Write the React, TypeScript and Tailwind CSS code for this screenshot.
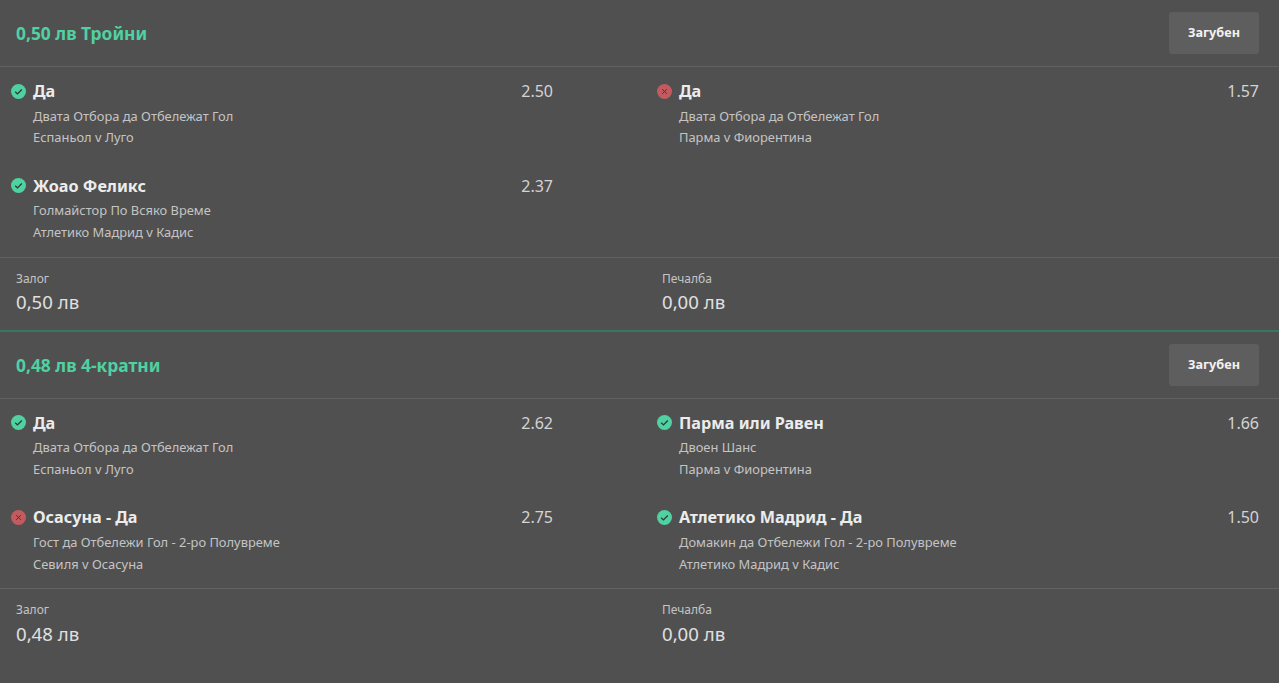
import React from 'react';

type Leg = { won: boolean; name: string; market: string; match: string; odds: string };
type Bet = { title: string; stake: string; returns: string; legs: (Leg | null)[] };

const bets: Bet[] = [
  {
    title: '0,50 лв Тройни',
    stake: '0,50 лв',
    returns: '0,00 лв',
    legs: [
      { won: true, name: 'Да', market: 'Двата Отбора да Отбележат Гол', match: 'Еспаньол v Луго', odds: '2.50' },
      { won: false, name: 'Да', market: 'Двата Отбора да Отбележат Гол', match: 'Парма v Фиорентина', odds: '1.57' },
      { won: true, name: 'Жоао Феликс', market: 'Голмайстор По Всяко Време', match: 'Атлетико Мадрид v Кадис', odds: '2.37' },
      null,
    ],
  },
  {
    title: '0,48 лв 4-кратни',
    stake: '0,48 лв',
    returns: '0,00 лв',
    legs: [
      { won: true, name: 'Да', market: 'Двата Отбора да Отбележат Гол', match: 'Еспаньол v Луго', odds: '2.62' },
      { won: true, name: 'Парма или Равен', market: 'Двоен Шанс', match: 'Парма v Фиорентина', odds: '1.66' },
      { won: false, name: 'Осасуна - Да', market: 'Гост да Отбележи Гол - 2-ро Полувреме', match: 'Севиля v Осасуна', odds: '2.75' },
      { won: true, name: 'Атлетико Мадрид - Да', market: 'Домакин да Отбележи Гол - 2-ро Полувреме', match: 'Атлетико Мадрид v Кадис', odds: '1.50' },
    ],
  },
];

const StatusIcon: React.FC<{ won: boolean }> = ({ won }) => (
  <svg width="15" height="15" viewBox="0 0 15 15" className="shrink-0">
    <circle cx="7.5" cy="7.5" r="7.5" fill={won ? '#4fd1a1' : '#c25b5f'} />
    {won ? (
      <path d="M4.2 7.7l2.3 2.2 4.3-4.4" fill="none" stroke="#2f3a36" strokeWidth="1.3" />
    ) : (
      <path d="M5.2 5.2l4.6 4.6M9.8 5.2l-4.6 4.6" fill="none" stroke="#4a3033" strokeWidth="1" />
    )}
  </svg>
);

const LegRow: React.FC<{ leg: Leg | null; left: boolean }> = ({ leg, left }) => {
  if (!leg) return <div />;
  return (
    <div className={`h-[94.8px] pl-[11px] pt-[13.2px] ${left ? 'pr-[93px]' : 'pr-5'}`}>
      <div className="flex items-center h-[22px]">
        <StatusIcon won={leg.won} />
        <span className="ml-[7px] text-[16.2px] font-bold text-[#ececec]">{leg.name}</span>
        <span className="ml-auto mb-[0.4px] text-[16px] text-[#d4d4d4]">{leg.odds}</span>
      </div>
      <div className="ml-[22px] mt-[3.4px] text-[12.9px] leading-[21.6px] text-[#c4c4c4]">
        <div>{leg.market}</div>
        <div>{leg.match}</div>
      </div>
    </div>
  );
};

const BetCard: React.FC<{ bet: Bet; last: boolean }> = ({ bet, last }) => (
  <section className={last ? '' : 'border-b-2 border-[#36775f]'}>
    <div className="flex items-center justify-between h-[67px] px-4 pr-5 border-b border-[#626262]">
      <h2 className="mt-[1px] text-[17.4px] font-bold text-[#4fd1a1]">{bet.title}</h2>
      <button className="w-[90px] h-[42px] rounded-[3px] bg-[#5e5e5e] text-[12.7px] font-bold text-[#f2f2f2]">Загубен</button>
    </div>
    <div className="grid grid-cols-[646px_633px] border-b border-[#626262]">
      {bet.legs.map((leg, index) => (
        <LegRow key={index} leg={leg} left={index % 2 === 0} />
      ))}
    </div>
    <div className="grid grid-cols-[646px_633px] h-[72px] pt-3">
      <div className="pl-4">
        <div className="text-[12px] leading-[18px] text-[#c4c4c4]">Залог</div>
        <div className="mt-[1.5px] text-[18.6px] leading-[26px] text-[#e0e0e0]">{bet.stake}</div>
      </div>
      <div className="pl-4">
        <div className="text-[12px] leading-[18px] text-[#c4c4c4]">Печалба</div>
        <div className="mt-[1.5px] text-[18.6px] leading-[26px] text-[#e0e0e0]">{bet.returns}</div>
      </div>
    </div>
  </section>
);

const App: React.FC = () => (
  <div className="min-h-[683px] bg-[#505050] font-['Noto_Sans',sans-serif]">
    {bets.map((bet, index) => (
      <BetCard key={index} bet={bet} last={index === bets.length - 1} />
    ))}
  </div>
);

export default App;
